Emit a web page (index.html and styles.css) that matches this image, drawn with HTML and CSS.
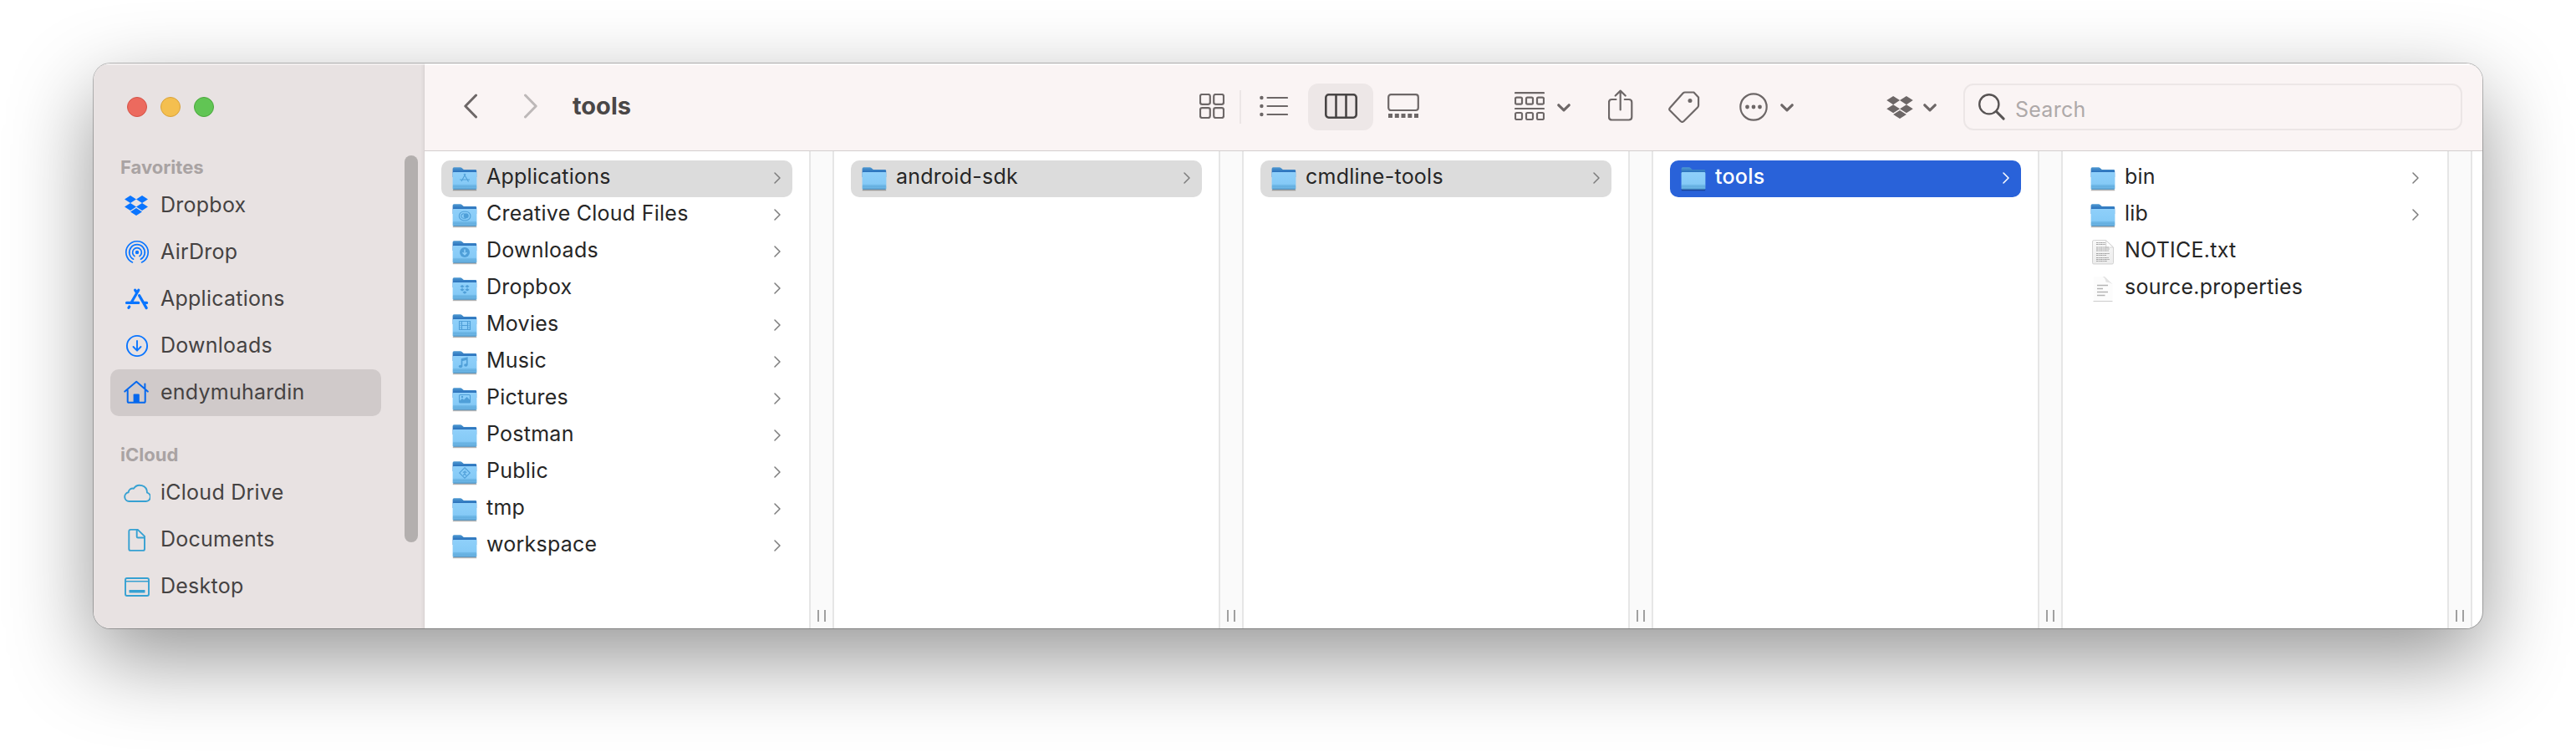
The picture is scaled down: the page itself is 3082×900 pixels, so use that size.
FILE: index.html
```html
<!DOCTYPE html>
<html lang="en">
<head>
<meta charset="utf-8">
<title>tools</title>
<link rel="stylesheet" href="styles.css">
</head>
<body>
<svg class="defs" width="0" height="0" aria-hidden="true">
  <defs>
    <linearGradient id="front" x1="0" y1="0" x2="0" y2="1">
      <stop offset="0" stop-color="#8fd0fa"/><stop offset=".76" stop-color="#84c9f6"/><stop offset=".8" stop-color="#70b9e8"/><stop offset="1" stop-color="#69b3e3"/>
    </linearGradient>
    <linearGradient id="back" x1="0" y1="0" x2="0" y2="1">
      <stop offset="0" stop-color="#4f9ad2"/><stop offset=".45" stop-color="#2d74bd"/><stop offset="1" stop-color="#2d74bd"/>
    </linearGradient>
    <linearGradient id="paper" x1="0" y1="0" x2="0" y2="1">
      <stop offset="0" stop-color="#f8f8f8"/><stop offset="1" stop-color="#ececec"/>
    </linearGradient>
    <symbol id="folder" viewBox="0 0 32 32">
      <path d="M1.800 29.300h28.400" stroke="#000" stroke-opacity=".3" stroke-width="1.800"/>
      <path d="M1.600 4q0-1.800 1.600-1.800h7.600q1 0 1.800.8l1.600 1.400q.6.500 1.600.500h13q1.400 0 1.400 1.400V14H1.600z" fill="url(#back)"/>
      <path d="M1.600 9.400q0-1.400 1.400-1.400h26q1.400 0 1.400 1.400v17.800q0 1.300-1.400 1.300H3q-1.400 0-1.400-1.300z" fill="url(#front)"/>
      <path d="M2 23.400h28M2 25.200h28" stroke="#4c9bd0" stroke-opacity=".55" stroke-width=".7"/>
      <path d="M2.400 28.200h27.200" stroke="#3d84b8" stroke-width=".8"/>
    </symbol>
    <symbol id="dropbox" viewBox="0 0 28 24">
      <path d="M7 0l7 4.500L7 9 0 4.500zM21 0l7 4.500L21 9l-7-4.500zM7 9l7 4.500L7 18l-7-4.500zM21 9l7 4.500L21 18l-7-4.500zM14 15l7 4.500L14 24l-7-4.500z"/>
    </symbol>
    <symbol id="next" viewBox="0 0 8 14"><path d="M1 1l6 6-6 6" fill="none" stroke="currentColor" stroke-width="1.500" stroke-linecap="round" stroke-linejoin="round"/></symbol>
    <symbol id="down" viewBox="0 0 16 10"><path d="M1.800 1.800L8 7.800l6.200-6" fill="none" stroke="currentColor" stroke-width="3.200" stroke-linecap="round" stroke-linejoin="round"/></symbol>
  </defs>
</svg>

<main class="window">
  <aside class="sidebar">
    <div class="lights"><i class="light red"></i><i class="light yellow"></i><i class="light green"></i></div>
    <h2 class="heading">Favorites</h2>
    <a class="place"><svg class="place-icon" viewBox="0 0 32 32"><use href="#dropbox" x="1" y="4" width="28" height="24" fill="currentColor"/></svg><span>Dropbox</span></a>
    <a class="place"><svg class="place-icon line" viewBox="0 0 32 32"><circle cx="16" cy="16" r="2.200" fill="currentColor" stroke="none"/><path d="M13 20.600a5.400 5.400 0 1 1 6 0M11.600 24.200a9.300 9.300 0 1 1 8.800 0M10.400 27.900a13.200 13.200 0 1 1 11.200 0" stroke-width="1.700"/></svg><span>AirDrop</span></a>
    <a class="place"><svg class="place-icon line" viewBox="0 0 32 32"><path d="M17.800 5.200L9.400 19.500M13.600 5.200l2 3.200M18.600 11.600l8.600 15M3.500 20.400h14.200M23.600 20.400h4M6.800 25l-.9 1.400" stroke-width="3.200"/></svg><span>Applications</span></a>
    <a class="place"><svg class="place-icon line" viewBox="0 0 32 32"><circle cx="16" cy="16" r="12.100" stroke-width="1.900"/><path d="M16 10v11.500M11.500 17l4.500 4.700 4.500-4.700" stroke-width="1.900"/></svg><span>Downloads</span></a>
    <a class="place current"><svg class="place-icon line" viewBox="0 0 32 32"><path d="M1.300 14.600L15.200 2.800l13.600 11.800M4.700 13v13.200q0 1.600 1.600 1.600h17.800q1.600 0 1.600-1.600V13M25.400 11V5.600" stroke-width="2"/><path d="M11.600 28V18.500q0-1 1-1h5.200q1 0 1 1V28z" fill="currentColor" stroke="none"/></svg><span>endymuhardin</span></a>
    <h2 class="heading second">iCloud</h2>
    <a class="place cloud"><svg class="place-icon line" viewBox="0 0 32 32"><path d="M6.500 26a5.400 5.400 0 0 1-.9-10.700 5.200 5.200 0 0 1 6.300-4.600A8.800 8.800 0 0 1 28 15.600 5.300 5.300 0 0 1 26.400 26z" stroke-width="1.900"/></svg><span>iCloud Drive</span></a>
    <a class="place cloud"><svg class="place-icon line" viewBox="0 0 32 32"><path d="M8.300 3.900h8.500l8.200 8v15q0 2-2 2H8.300q-2 0-2-2v-21q0-2 2-2zM15.700 4v8.200q0 1.300 1.300 1.300h8" stroke-width="1.900"/></svg><span>Documents</span></a>
    <a class="place cloud"><svg class="place-icon line" viewBox="0 0 32 32"><rect x="2" y="6" width="28" height="21" rx="2" stroke-width="1.900"/><path d="M2 9.800h28" stroke-width="1.500"/><rect x="6.500" y="20" width="19" height="3.600" rx=".6" fill="currentColor" stroke="none"/></svg><span>Desktop</span></a>
    <span class="scrollbar"></span>
  </aside>

  <section class="content">
    <header class="toolbar">
      <svg class="t-back" viewBox="0 0 16 30"><path d="M14.500 2L1.800 15l12.700 13"/></svg>
      <svg class="t-forward" viewBox="0 0 16 30"><path d="M1.500 2l12.700 13L1.500 28"/></svg>
      <h1 class="title">tools</h1>
      <svg class="t-grid" viewBox="0 0 30 30"><rect x="1" y="1" width="11.800" height="11.800" rx="2.200"/><rect x="17.200" y="1" width="11.800" height="11.800" rx="2.200"/><rect x="1" y="17.200" width="11.800" height="11.800" rx="2.200"/><rect x="17.200" y="17.200" width="11.800" height="11.800" rx="2.200"/></svg>
      <i class="separator"></i>
      <svg class="t-list" viewBox="0 0 34 26"><path d="M9.500 3H33M9.500 13H33M9.500 23H33"/><g class="solid"><circle cx="2.400" cy="3" r="2.200"/><circle cx="2.400" cy="13" r="2.200"/><circle cx="2.400" cy="23" r="2.200"/></g></svg>
      <span class="mode"><svg class="t-columns" viewBox="0 0 40 30"><rect x="1.300" y="1.300" width="36.400" height="27.400" rx="3.400"/><path d="M13.500 1.500v27M25.500 1.500v27"/></svg></span>
      <svg class="t-gallery" viewBox="0 0 38 30"><rect x="1.200" y="1.200" width="35.600" height="18.800" rx="3"/><path class="solid" d="M1 24h5v5H1zM8.800 24h5v5h-5zM16.500 24h5v5h-5zM24.300 24h5v5h-5zM32 24h5v5h-5z"/></svg>
      <svg class="t-group" viewBox="0 0 36 34"><path d="M1 1.200h34M1 20h34"/><rect x="1" y="6.600" width="8" height="8" rx="1.600"/><rect x="14" y="6.600" width="8" height="8" rx="1.600"/><rect x="27" y="6.600" width="8" height="8" rx="1.600"/><rect x="1" y="25" width="8" height="8" rx="1.600"/><rect x="14" y="25" width="8" height="8" rx="1.600"/><rect x="27" y="25" width="8" height="8" rx="1.600"/></svg>
      <svg class="t-chevron"><use href="#down"/></svg>
      <svg class="t-share" viewBox="0 0 30 38"><path d="M9.500 12H4.500Q1 12 1 15.500V33q0 3.500 3.500 3.500h20.300q3.500 0 3.500-3.500V15.500q0-3.500-3.500-3.500h-5M14.700 24.500V1.800M8.700 7.500l6-5.900 6 5.900"/></svg>
      <svg class="t-tag" viewBox="0 0 38 38"><path d="M20 1.500h10.500l5.600 6v9.600q0 1.400-1 2.400L18.300 36.200q-1.700 1.500-3.400 0L2 23.300q-1.500-1.600 0-3.200L17.600 2.500q1-1 2.400-1z"/><circle class="solid" cx="26" cy="11.500" r="2.500"/></svg>
      <svg class="t-more" viewBox="0 0 34 34"><circle cx="17" cy="17" r="15.700"/><g class="solid"><circle cx="9.500" cy="17" r="2.400"/><circle cx="17" cy="17" r="2.400"/><circle cx="24.500" cy="17" r="2.400"/></g></svg>
      <svg class="t-chevron"><use href="#down"/></svg>
      <svg class="t-dropbox"><use href="#dropbox"/></svg>
      <svg class="t-chevron third"><use href="#down"/></svg>
      <div class="search"><svg class="search-icon" viewBox="0 0 32 32"><circle cx="12.800" cy="12.800" r="11.600"/><path d="M21.300 21.300l8.800 8.800" stroke-width="3"/></svg><span>Search</span></div>
    </header>

    <div class="columns">
      <div class="column"><div class="list">
        <div class="row selected"><svg class="file-icon"><use href="#folder"/><path class="mark" d="M17 10l-5 9M15 10l5.500 9.500M10 17h12" /></svg><span>Applications</span><svg class="next"><use href="#next"/></svg></div>
        <div class="row"><svg class="file-icon"><use href="#folder"/><path class="mark" d="M14.500 11.300h3.200a5.200 5.200 0 0 1 0 10.400h-3.200a5.200 5.200 0 0 1 0-10.400zM17.500 19.200h-3a2.700 2.700 0 1 1 1.800-4.700l3.200 3"/><circle class="mark-fill" cx="17.700" cy="16.300" r="3"/></svg><span>Creative Cloud Files</span><svg class="next"><use href="#next"/></svg></div>
        <div class="row"><svg class="file-icon"><use href="#folder"/><circle class="mark-fill" cx="16" cy="16" r="6"/><path class="mark-light" d="M16 12.500v6M13.500 16.300l2.500 2.500 2.500-2.500"/></svg><span>Downloads</span><svg class="next"><use href="#next"/></svg></div>
        <div class="row"><svg class="file-icon"><use href="#folder"/><path class="mark-fill" d="M13 11l2.600 1.700L13 14.400l-2.600-1.700zM19 11l2.600 1.700-2.600 1.700-2.600-1.700zM13 15l2.600 1.700L13 18.400l-2.600-1.700zM19 15l2.600 1.700-2.600 1.700-2.600-1.700zM16 18.300l2.600 1.700-2.600 1.700-2.600-1.700z"/></svg><span>Dropbox</span><svg class="next"><use href="#next"/></svg></div>
        <div class="row"><svg class="file-icon"><use href="#folder"/><path class="mark" d="M9.500 10.500h13v10h-13zM12.500 10.500v10M19.500 10.500v10M12.500 15.500h7"/><path class="mark thin" d="M9.500 13h3M9.500 15.500h3M9.500 18h3M19.500 13h3M19.500 15.500h3M19.500 18h3"/></svg><span>Movies</span><svg class="next"><use href="#next"/></svg></div>
        <div class="row"><svg class="file-icon"><use href="#folder"/><path class="mark strong" d="M12.500 20.300v-8.500l6.300-1.500v8.500M12.500 13.300l6.300-1.500"/><ellipse class="mark-fill" cx="11" cy="20.500" rx="2.200" ry="1.800"/><ellipse class="mark-fill" cx="17.300" cy="19" rx="2.200" ry="1.800"/></svg><span>Music</span><svg class="next"><use href="#next"/></svg></div>
        <div class="row"><svg class="file-icon"><use href="#folder"/><rect class="mark" x="9.500" y="10.500" width="13" height="9.500" rx="1"/><path class="mark-fill" d="M10 20v-2.500l3-2.500 2 1.500 3.500-3.500 4 4v3z"/><circle class="mark-fill" cx="13" cy="13" r="1.200"/></svg><span>Pictures</span><svg class="next"><use href="#next"/></svg></div>
        <div class="row"><svg class="file-icon"><use href="#folder"/></svg><span>Postman</span><svg class="next"><use href="#next"/></svg></div>
        <div class="row"><svg class="file-icon"><use href="#folder"/><path class="mark" d="M16 9.700l6.300 6.300-6.300 6.300L9.700 16zM16.500 12.500v.8M16 14.200v2.600l1.800 2.600M16 16.800l-1.800 2.400M13.800 15.600l2.200-1.200 2.400 1.200"/></svg><span>Public</span><svg class="next"><use href="#next"/></svg></div>
        <div class="row"><svg class="file-icon"><use href="#folder"/></svg><span>tmp</span><svg class="next"><use href="#next"/></svg></div>
        <div class="row"><svg class="file-icon"><use href="#folder"/></svg><span>workspace</span><svg class="next"><use href="#next"/></svg></div>
      </div><div class="gutter"><i class="grip"></i></div></div>
      <div class="column"><div class="list">
        <div class="row selected"><svg class="file-icon"><use href="#folder"/></svg><span>android-sdk</span><svg class="next"><use href="#next"/></svg></div>
      </div><div class="gutter"><i class="grip"></i></div></div>
      <div class="column"><div class="list">
        <div class="row selected"><svg class="file-icon"><use href="#folder"/></svg><span>cmdline-tools</span><svg class="next"><use href="#next"/></svg></div>
      </div><div class="gutter"><i class="grip"></i></div></div>
      <div class="column"><div class="list">
        <div class="row active"><svg class="file-icon"><use href="#folder"/></svg><span>tools</span><svg class="next"><use href="#next"/></svg></div>
      </div><div class="gutter"><i class="grip"></i></div></div>
      <div class="column"><div class="list">
        <div class="row"><svg class="file-icon"><use href="#folder"/></svg><span>bin</span><svg class="next"><use href="#next"/></svg></div>
        <div class="row"><svg class="file-icon"><use href="#folder"/></svg><span>lib</span><svg class="next"><use href="#next"/></svg></div>
        <div class="row"><svg class="file-icon"><path d="M5.500 1.500h14l9 8.500v18.500q0 1.500-1.500 1.500H5q-1.500 0-1.500-1.500V3q0-1.500 2-1.500z" fill="url(#paper)" stroke="#c9c9c9" stroke-width=".8"/><path d="M19.800 1.800V10h8.500z" fill="#fff" stroke="#ccc" stroke-width=".8"/><path d="M8 4.500h11M8 6.500h11M8 10h15M8 12h16M8 14h15M8 17.500h16M8 19.500h12M8 22.500h15M8 24.500h16M8 26.500h13" stroke="#a2a2a2" stroke-width="1" stroke-dasharray="2.500 .6 1.500 .5"/></svg><span>NOTICE.txt</span></div>
        <div class="row"><svg class="file-icon"><path d="M5 1h13l9.500 9v20H5z" fill="#fcfcfc"/><path d="M15.500 1q3.500 1.500 4 6.500 5 0 8 2.500L18 1z" fill="#e2e2e2"/><path d="M4.500 30.500h23" stroke="#ccc" stroke-width="1"/><path d="M9 11.500h13M9 15.500h7M9 19.500h13M9 23.500h9.500" stroke="#b4b4b4" stroke-width="1.400"/></svg><span>source.properties</span></div>
      </div><div class="gutter"><i class="grip"></i></div></div>
    </div>
  </section>
</main>
</body>
</html>
```
FILE: styles.css
```css
* { box-sizing: border-box; }
body { margin: 0; width: 3082px; height: 900px; padding: 76px 112px 148px; background: #fff; overflow: hidden; font-family: Inter, "Liberation Sans", sans-serif; font-size: 25px; letter-spacing: .25px; color: #262626; }
h1, h2 { margin: 0; }
svg { display: block; flex: none; }
.defs { position: absolute; }
.window { display: flex; width: 2858px; height: 676px; border-radius: 20px; overflow: hidden; box-shadow: 0 0 0 1px rgba(0,0,0,.25), 0 36px 100px rgba(0,0,0,.42); background: #fff; }

.sidebar { position: relative; width: 396px; padding: 40px 20px 0; background: linear-gradient(to right, transparent 391px, rgba(0,0,0,.035) 395px, #d8d2d2 395px), #e8e2e2; box-shadow: inset 0 1.500px 0 rgba(255,255,255,.6); flex: none; }
.lights { display: flex; gap: 16px; padding-left: 20px; height: 66px; }
.light { width: 24px; height: 24px; border-radius: 50%; border: 1px solid; }
.red { background: #ec6a5e; border-color: #d55247; }
.yellow { background: #f4bf4f; border-color: #d9a23a; }
.green { background: #61c554; border-color: #4aa73c; }
.heading { height: 36px; padding-left: 12px; font-size: 22px; line-height: 36px; font-weight: 700; letter-spacing: 0; color: #a9a3a3; }
.heading.second { height: 64px; padding-top: 28px; }
.place { display: flex; align-items: center; gap: 12px; height: 56px; padding-left: 16px; border-radius: 10px; color: #454242; width: 324px; }
.place span { padding-bottom: 2px; }
.place.current { background: #d0caca; }
.place-icon { width: 32px; height: 32px; color: #0a75ff; }
.current .place-icon { color: #0568ee; }
.cloud .place-icon { color: #36a1d2; }
.line { fill: none; stroke: currentColor; stroke-linecap: round; stroke-linejoin: round; }
.scrollbar { position: absolute; left: 372px; top: 110px; width: 16px; height: 463px; border-radius: 8px; background: #b3afae; }

.content { flex: 1; display: flex; flex-direction: column; min-width: 0; }
.toolbar { display: flex; align-items: center; height: 105px; padding-left: 47px; background: #faf4f4; border-bottom: 1px solid #d3cece; box-shadow: inset 0 2px 0 #fffdfd; color: #6d6767; flex: none; }
.toolbar svg { fill: none; stroke: currentColor; stroke-width: 2.200; stroke-linecap: round; stroke-linejoin: round; }
.toolbar .solid { fill: currentColor; stroke: none; }
.t-back { width: 16px; height: 30px; margin-bottom: 2px; }
.toolbar .t-back, .toolbar .t-forward { stroke-width: 3; }
.toolbar .t-forward { width: 16px; height: 30px; margin: 0 0 2px 56px; color: #bdb8b8; }
.title { margin: 0 0 2px 42px; width: 750px; font-size: 29px; line-height: 40px; font-weight: 700; color: #4a4747; letter-spacing: 0; }
.t-grid { width: 30px; height: 30px; margin-bottom: 2px; }
.separator { width: 2px; height: 40px; margin: 0 22px 0 18px; background: #ece6e6; }
.t-list { width: 34px; height: 26px; margin-bottom: 2px; }
.mode { display: flex; align-items: center; justify-content: center; width: 78px; height: 56px; margin: 0 17px 0 24px; padding: 0 0 2px 1px; border-radius: 12px; background: #ede7e7; }
.toolbar .t-columns { width: 40px; height: 30px; color: #484545; stroke-width: 2.600; }
.t-gallery { width: 38px; height: 30px; margin-bottom: 2px; }
.t-group { width: 36px; height: 34px; margin: 0 0 2px 114px; }
.toolbar .t-chevron { width: 16px; height: 10px; margin: 1px 0 0 15px; }
.t-share { width: 30px; height: 38px; margin: 0 0 4px 45px; }
.t-tag { width: 38px; height: 38px; margin: 0 0 1px 42px; }
.t-more { width: 34px; height: 34px; margin: 0 0 1px 47px; }
.toolbar .t-dropbox { width: 32px; height: 27px; margin-left: 111px; fill: currentColor; stroke: none; }
.toolbar .third { margin-left: 12px; }
.search { display: flex; align-items: center; gap: 12px; width: 597px; height: 56px; margin-left: 32px; padding-left: 16px; border: 2px solid #ece6e6; border-radius: 12px; color: #aea9a9; }
.search span { padding-top: 5px; }
.toolbar .search-icon { width: 32px; height: 32px; color: #585454; stroke-width: 2.400; }

.columns { display: flex; flex: 1; }
.column { display: flex; width: 490px; flex: none; }
.list { width: 460px; padding: 11px 20px; }
.row { display: flex; align-items: center; width: 420px; height: 44px; padding: 0 14px 0 12px; border-radius: 10px; white-space: nowrap; }
.row span { padding-bottom: 7px; }
.row.selected { background: #dcdcdc; }
.row.active { background: #2962d9; color: #fff; }
.row.active span { font-weight: 500; }
.file-icon { width: 32px; height: 32px; margin: 0 10px 0 0; }
.next { width: 8px; height: 14px; margin: 0 0 2px auto; color: #7d7d7d; }
.active .next { color: #fff; }
.mark { fill: none; stroke: #4f9fd8; stroke-width: 1.100; }
.thin { stroke-width: .6; }
.strong { stroke-width: 1.700; }
.mark-fill { fill: #4f9fd8; }
.mark-light { fill: none; stroke: #8fd0fa; stroke-width: 1.500; }
.gutter { display: flex; align-items: flex-end; justify-content: center; width: 30px; padding-bottom: 8px; background: #fafafa; border: solid #e6e6e6; border-width: 0 2px; }
.grip { width: 10px; height: 14px; border: solid #a0a0a0; border-width: 0 2px; }
```
